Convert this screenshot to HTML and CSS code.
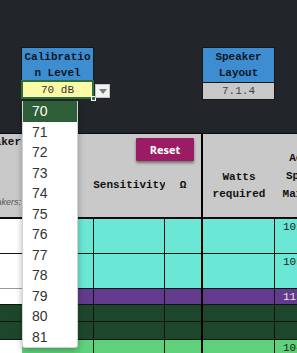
FILE: index.html
```html
<!DOCTYPE html>
<html lang="en">
<head>
  <meta charset="UTF-8">
  <meta name="viewport" content="width=device-width, initial-scale=1">
  <title>Speaker Calculator</title>
  <link rel="stylesheet" href="styles.css">
</head>
<body>
  <div class="sheet">
    <!-- Input fields above the table -->
    <div class="top">
      <div class="field cal">
        <div class="field-head">Calibration Level</div>
        <div class="field-value yellow selected">70 dB</div>
        <span class="fill-handle"></span>
        <button class="drop-btn"><span class="tri"></span></button>
        <ul class="drop-list">
          <li class="active">70</li>
          <li>71</li>
          <li>72</li>
          <li>73</li>
          <li>74</li>
          <li>75</li>
          <li>76</li>
          <li>77</li>
          <li>78</li>
          <li>79</li>
          <li>80</li>
          <li>81</li>
        </ul>
      </div>
      <div class="field layout">
        <div class="field-head">Speaker Layout</div>
        <div class="field-value grey">7.1.4</div>
      </div>
    </div>

    <!-- Speaker table -->
    <div class="grid">
      <button class="reset-btn">Reset</button>

      <div class="cell head h-first no-right">
        <span>Speaker</span>
        <span class="note">speakers:</span>
      </div>
      <div class="cell head no-right"></div>
      <div class="cell head no-right low">Sensitivity</div>
      <div class="cell head thick low">Ω</div>
      <div class="cell head no-right">Watts<br>required</div>
      <div class="cell head no-right tall">Actual<br>Speaker<br>Max (dB)</div>

      <div class="cell wh no-right"></div>
      <div class="cell cy"></div>
      <div class="cell cy"></div>
      <div class="cell cy thick"></div>
      <div class="cell cy"></div>
      <div class="cell cy num">102</div>

      <div class="cell wh no-right soft"></div>
      <div class="cell cy"></div>
      <div class="cell cy"></div>
      <div class="cell cy thick"></div>
      <div class="cell cy"></div>
      <div class="cell cy num">105</div>

      <div class="cell wh no-right"></div>
      <div class="cell pu"></div>
      <div class="cell pu"></div>
      <div class="cell pu thick"></div>
      <div class="cell pu"></div>
      <div class="cell pu num">113</div>

      <div class="cell dg no-right"></div>
      <div class="cell dg"></div>
      <div class="cell dg"></div>
      <div class="cell dg thick"></div>
      <div class="cell dg"></div>
      <div class="cell dg"></div>

      <div class="cell dg no-right"></div>
      <div class="cell dg"></div>
      <div class="cell dg"></div>
      <div class="cell dg thick"></div>
      <div class="cell dg"></div>
      <div class="cell dg"></div>

      <div class="cell wh no-right"></div>
      <div class="cell lg"></div>
      <div class="cell lg"></div>
      <div class="cell lg thick"></div>
      <div class="cell lg"></div>
      <div class="cell lg num">104</div>
    </div>
  </div>
</body>
</html>
```

FILE: styles.css
```css
/* Reset */
* {
  margin: 0;
  padding: 0;
  box-sizing: border-box;
}
body {
  background-color: #222529;
  font-family: "Liberation Mono", monospace;
  color: #111;
}
.sheet {
  width: 297px;
  height: 353px;
  overflow: hidden;
}
/* Top input fields */
.top {
  height: 133px;
  display: flex;
  align-items: flex-start;
  gap: 108px;
  padding: 47px 0 0 21px;
}
.field {
  position: relative;
  width: 73px;
  border: 1px solid #141618;
  text-align: center;
  font-size: 11px;
}
.field-head {
  height: 33px;
  padding-top: 1px;
  line-height: 16px;
  background-color: #3d8dd0;
  color: #0e1724;
  font-weight: bold;
  overflow-wrap: anywhere;
}
.layout .field-head {
  height: 34px;
}
.field-value {
  height: 17px;
  line-height: 17px;
  border-top: 1px solid #141618;
  color: #333;
}
.yellow {
  background-color: #fafaa6;
}
.grey {
  background-color: #c8c8c8;
  color: #444;
}
.selected {
  outline: 2px solid #2f6d3e;
  outline-offset: -1px;
}
.fill-handle {
  position: absolute;
  right: -3px;
  bottom: -3px;
  width: 5px;
  height: 5px;
  background-color: #2f6d3e;
  border: 1px solid #fff;
}
.drop-btn {
  position: absolute;
  left: 73px;
  top: 36px;
  width: 15px;
  height: 14px;
  background-color: #f2f2f2;
  border: 1px solid #c4c4c4;
  display: flex;
  align-items: center;
  justify-content: center;
}
.drop-btn .tri {
  border-left: 4px solid transparent;
  border-right: 4px solid transparent;
  border-top: 5px solid #7a7a7a;
}
.drop-list {
  position: absolute;
  left: 0;
  top: 53px;
  width: 56px;
  z-index: 10;
  list-style: none;
  background-color: #fff;
  border: 1px solid #d2d2d2;
  border-top: none;
  border-radius: 0 0 3px 3px;
  box-shadow: 0 2px 6px rgba(0,0,0,0.3);
  font-family: "Liberation Sans", Arial, sans-serif;
  font-size: 14px;
  color: #333;
  text-align: left;
}
.drop-list li {
  height: 20.5px;
  line-height: 20.5px;
  padding-left: 9px;
}
.drop-list li.active {
  background-color: #2e5e37;
  color: #fff;
}
/* Table grid */
.grid {
  position: relative;
  display: grid;
  grid-template-columns: 22px 72px 71px 38px 72px 68px;
  grid-template-rows: 85px 35px 35px 16px 17px 18px 20px;
  width: 343px;
  border-top: 1px solid #0c0c0c;
}
.cell {
  border-right: 1px solid #141414;
  border-bottom: 1px solid #141414;
  overflow: hidden;
  font-size: 11px;
  line-height: 17px;
}
.head {
  display: flex;
  flex-direction: column;
  justify-content: flex-end;
  align-items: center;
  padding-bottom: 14px;
  background-color: #c9c9c9;
  border-bottom: 2px solid #0c0c0c;
  font-weight: bold;
  text-align: center;
  white-space: nowrap;
  overflow: visible;
}
.head.low {
  padding-bottom: 23px;
}
.head.tall {
  line-height: 18px;
}
.h-first {
  justify-content: space-between;
  align-items: flex-end;
  padding: 0 1px 8px 0;
  overflow: hidden;
}
.h-first .note {
  font-family: "Liberation Sans", Arial, sans-serif;
  font-style: italic;
  font-weight: normal;
  font-size: 9px;
  line-height: 14px;
  color: #555;
}
.no-right {
  border-right: none;
}
.thick {
  border-right: 2px solid #000;
}
.soft {
  border-bottom-color: #999;
}
.wh {
  background-color: #fff;
}
.cy {
  background-color: #6be7d6;
}
.pu {
  background-color: #633b8d;
  color: #e4e4e4;
}
.dg {
  background-color: #1d472b;
}
.lg {
  background-color: #5fd17a;
}
.num {
  padding-left: 8px;
  color: #222;
}
.pu.num {
  color: #e4e4e4;
}
/* Reset button floats over the header */
.reset-btn {
  position: absolute;
  left: 136px;
  top: 4px;
  width: 58px;
  height: 23px;
  z-index: 1;
  background-color: #9b1c65;
  color: #fff;
  border: none;
  border-radius: 1px;
  box-shadow: 0 2px 3px rgba(0,0,0,0.45);
  font-family: "Open Sans", "Liberation Sans", sans-serif;
  font-weight: bold;
  font-size: 11px;
}
```
